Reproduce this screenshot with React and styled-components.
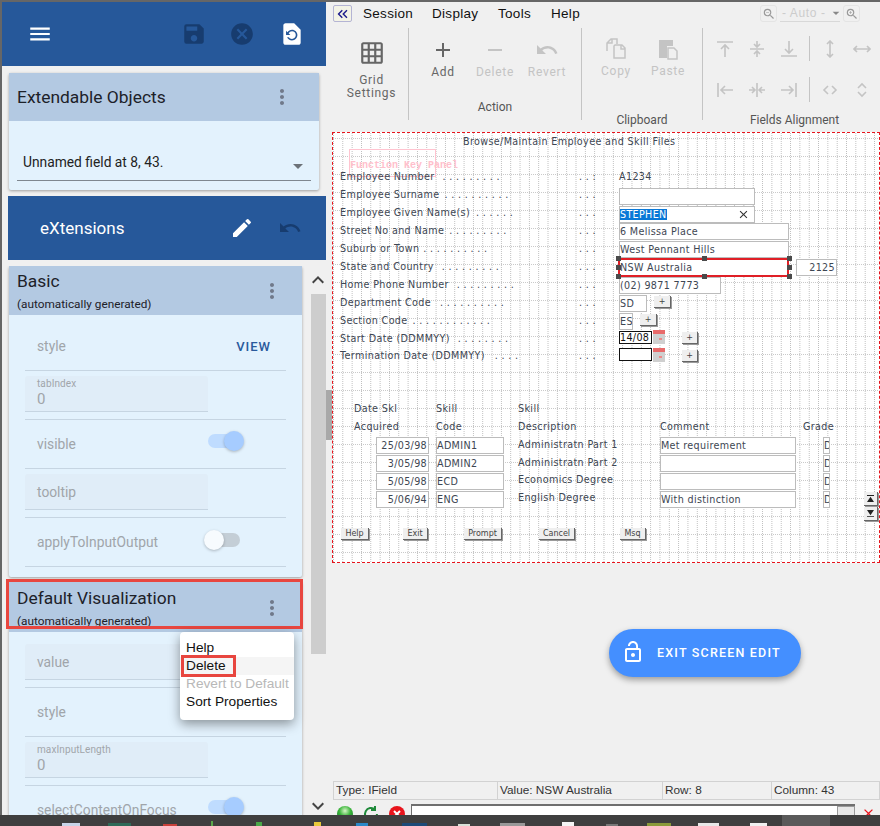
import React from 'react';
import styled, { createGlobalStyle, css } from 'styled-components';
import {
  MdMenu, MdSave, MdCancel, MdRestorePage, MdMoreVert, MdEdit, MdUndo, MdArrowDropDown,
  MdKeyboardArrowUp, MdKeyboardArrowDown, MdKeyboardDoubleArrowLeft, MdAdd, MdRemove, MdLockOpen,
  MdGridOn, MdZoomIn, MdZoomOut, MdClose,
} from 'react-icons/md';

const GlobalStyle = createGlobalStyle`
  html, body { margin: 0; padding: 0; height: 100%; }
  body { font-family: Roboto, "Liberation Sans", sans-serif; background: #f0f0f0; overflow: hidden; }
  #root { height: 100%; }
`;

const blue = '#26589a';
const navy = '#173c6f';

const Page = styled.div`
  position: relative;
  width: 880px;
  height: 826px;
  overflow: hidden;
  display: flex;
  flex-direction: column;
  background: #f0f0f0;
  border-top: 2px solid #666;
  box-sizing: border-box;
`;

const Main = styled.div`
  flex: 1;
  display: flex;
  min-height: 0;
`;

/* left panel */
const Side = styled.aside`
  width: 326px;
  flex: none;
  box-sizing: border-box;
  border-left: 2px solid #666;
  display: flex;
  flex-direction: column;
`;

const TopBar = styled.div`
  height: 64px;
  flex: none;
  background: ${blue};
  display: flex;
  align-items: center;
  padding: 0 0 0 25px;
  color: #fff;
  font-size: 26px;
  svg { display: block; }
`;

const BarIcon = styled.span`
  display: flex;
  color: ${(p) => (p.$off ? navy : '#fff')};
  margin-left: ${(p) => p.$gap || 0}px;
  font-size: ${(p) => p.$size || 26}px;
`;

const Card = styled.section`
  background: #e3f2fd;
  box-shadow: 0 1px 3px rgba(0, 0, 0, 0.35);
  border-radius: 2px;
  position: relative;
`;

const ObjectsCard = styled(Card)`
  margin: 7px 7px 0 7px;
  height: 117px;
`;

const CardHead = styled.header`
  background: #b3c9e2;
  height: ${(p) => p.$h}px;
  box-sizing: border-box;
  padding: ${(p) => p.$top || 0}px 0 0 8px;
  position: relative;
  color: #1d2129;
  overflow: hidden;
`;

const CardTitle = styled.div`
  font-size: 17.4px;
  line-height: 22px;
`;

const Sub = styled.div`
  font-size: 11.8px;
  line-height: 16px;
  margin-top: 4px;
`;

const Kebab = styled.span`
  position: absolute;
  right: ${(p) => p.$r}px;
  top: ${(p) => p.$t}px;
  display: flex;
  color: #70798a;
  font-size: 24px;
`;

const Select = styled.div`
  margin: 30px 8px 0 8px;
  height: 29px;
  border-bottom: 1px solid #7f8790;
  padding-left: 6px;
  display: flex;
  justify-content: space-between;
  font-size: 13.8px;
  line-height: 22px;
  color: #222;
  svg { font-size: 24px; color: #6c7278; margin: 3px 1px 0 0; }
`;

const ExtBar = styled.div`
  margin: 6px 0 0 6px;
  height: 64px;
  flex: none;
  background: ${blue};
  display: flex;
  align-items: center;
  padding-left: 32px;
  color: #fff;
  font-size: 17px;
`;

const ExtTitle = styled.span`
  width: 190px;
`;

const PropsArea = styled.div`
  flex: 1;
  min-height: 0;
  margin-top: 6px;
  display: flex;
  position: relative;
  overflow: hidden;
`;

const PropsList = styled.div`
  width: 293px;
  margin-left: 7px;
  display: flex;
  flex-direction: column;
  gap: 5px;
`;

const CardBody = styled.div`
  padding: ${(p) => p.$top}px 16px 10px 16px;
`;

const Row = styled.div`
  height: 49px;
  box-sizing: border-box;
  border-bottom: 1px solid #c6d5e2;
  display: flex;
  align-items: center;
  justify-content: space-between;
  padding-left: 12px;
  font-size: 13.8px;
  color: #a0a5aa;
  position: relative;
`;

const ViewLink = styled.span`
  color: #2a5a9c;
  font-size: 13px;
  font-weight: 500;
  letter-spacing: 1px;
  margin-right: 15px;
`;

const InputRow = styled.div`
  height: 49px;
  box-sizing: border-box;
  border-bottom: 1px solid #c6d5e2;
  padding-top: 5px;
`;

const InputBox = styled.div`
  width: 183px;
  height: 36px;
  box-sizing: border-box;
  background: #e0edf8;
  border-bottom: 1px solid #c6d5e2;
  border-radius: 3px 3px 0 0;
  padding-left: 12px;
  color: #a0a5aa;
  font-size: 13.8px;
  display: flex;
  flex-direction: column;
  justify-content: center;
`;

const InputLabel = styled.div`
  font-size: 10px;
  line-height: 11px;
  letter-spacing: 0.1px;
`;

const InputValue = styled.div`
  line-height: 20px;
  font-size: 15px;
`;

const Track = styled.span`
  position: absolute;
  top: ${(p) => p.$t}px;
  left: ${(p) => (p.$on ? 183 : 185)}px;
  width: ${(p) => (p.$on ? 34 : 30)}px;
  height: 14px;
  border-radius: 7px;
  background: ${(p) => (p.$on ? '#bfdcff' : '#c4ced6')};
`;

const Thumb = styled.span`
  position: absolute;
  top: -3px;
  left: ${(p) => (p.$on ? 16 : -6)}px;
  width: 20px;
  height: 20px;
  border-radius: 50%;
  background: ${(p) => (p.$on ? '#a6ccff' : '#f7fbfe')};
  box-shadow: 0 1px 3px rgba(0, 0, 0, 0.25);
`;

const Scroller = styled.div`
  position: absolute;
  left: 308px;
  top: 0;
  bottom: 0;
  width: 16px;
  display: flex;
  flex-direction: column;
  align-items: center;
  color: #444;
`;

const ScrollArrow = styled.span`
  display: flex;
  height: ${(p) => p.$h}px;
  align-items: center;
  font-size: 24px;
  flex: none;
`;

const ScrollThumb = styled.div`
  width: 15px;
  height: 360px;
  background: #cdcdcd;
  flex: none;
`;

const Spacer = styled.div`
  flex: 1;
`;

const Menu = styled.div`
  position: absolute;
  left: 178px;
  top: 366px;
  width: 114px;
  height: 88px;
  box-sizing: border-box;
  background: #fff;
  border-radius: 4px;
  padding-top: 7px;
  box-shadow: 0 4px 12px rgba(0, 0, 0, 0.4);
  font-family: "Liberation Sans", Arial, sans-serif;
  font-size: 13.7px;
  color: #111;
`;

const MenuItem = styled.div`
  height: 18px;
  line-height: 18px;
  padding-left: 6px;
  ${(p) => p.$hover && css`background: #f5f5f5;`}
  ${(p) => p.$off && css`color: #b8b8b8;`}
`;

const Callout = styled.div`
  position: absolute;
  box-sizing: border-box;
  border: 3px solid #e8463f;
  left: ${(p) => p.$x}px;
  top: ${(p) => p.$y}px;
  width: ${(p) => p.$w}px;
  height: ${(p) => p.$h}px;
  pointer-events: none;
`;

const Sash = styled.div`
  position: absolute;
  left: 326px;
  top: 388px;
  width: 6px;
  height: 50px;
  background: #a8a8a8;
`;

/* right side */
const Work = styled.div`
  flex: 1;
  min-width: 0;
  padding-left: 6px;
  display: flex;
  flex-direction: column;
  position: relative;
`;

const MenuBar = styled.div`
  height: 23px;
  display: flex;
  align-items: center;
  font-family: "Liberation Sans", Arial, sans-serif;
  font-size: 13.5px;
  color: #111;
  flex: none;
`;

const BackBtn = styled.span`
  width: 19px;
  height: 17px;
  box-sizing: border-box;
  margin: 0 11px 0 1px;
  border: 1px solid #b4b4d4;
  border-radius: 2px;
  background: #f3f3e6;
  color: #1c1c8c;
  display: flex;
  align-items: center;
  justify-content: center;
  font-size: 20px;
`;

const MenuText = styled.span`
  width: ${(p) => p.$w}px;
  letter-spacing: 0.3px;
`;

const ZoomArea = styled.div`
  margin-left: auto;
  margin-right: 20px;
  display: flex;
  align-items: center;
  color: #c8c8c8;
  font-size: 12px;
  gap: 3px;
`;

const ZoomBtn = styled.span`
  width: 17px;
  height: 17px;
  border: 1px solid #e4e4e4;
  border-radius: 3px;
  display: flex;
  align-items: center;
  justify-content: center;
  font-size: 14px;
  color: #999;
  box-sizing: border-box;
`;

const ZoomSelect = styled.span`
  width: 60px;
  height: 17px;
  box-sizing: border-box;
  padding-left: 2px;
  border-bottom: 1px solid #d8d8d8;
  display: flex;
  align-items: center;
  white-space: nowrap;
  letter-spacing: 0.6px;
  color: #ccc;
  svg { color: #888; font-size: 16px; flex: none; margin-left: 3px; }
`;

const Ribbon = styled.div`
  height: 108px;
  flex: none;
  display: flex;
  padding-top: 3px;
  box-sizing: border-box;
`;

const Group = styled.div`
  width: ${(p) => p.$w}px;
  height: 92px;
  box-sizing: border-box;
  flex: none;
  padding-left: ${(p) => p.$pad || 0}px;
  border-right: ${(p) => (p.$last ? 'none' : '1px solid #c4c4c4')};
  display: flex;
  flex-direction: column;
  align-items: center;
  font-size: 12px;
  color: #666;
`;

const Tools = styled.div`
  display: flex;
  justify-content: center;
  width: 100%;
  height: ${(p) => p.$h}px;
  flex: none;
`;

const Tool = styled.div`
  width: ${(p) => p.$w || 52}px;
  display: flex;
  flex-direction: column;
  align-items: center;
  padding-top: ${(p) => p.$top}px;
  color: ${(p) => (p.$off ? '#c4c4c4' : '#666')};
  line-height: 13px;
  text-align: center;
  font-size: 12px;
  letter-spacing: 0.7px;
  svg { display: block; margin-bottom: ${(p) => p.$gap}px; }
`;

const GroupLabel = styled.div`
  color: #555;
  line-height: 14px;
  margin-left: ${(p) => p.$ml || 0}px;
`;

const AlignGrid = styled.div`
  width: 100%;
  height: 76px;
  flex: none;
  display: grid;
  grid-template-columns: repeat(3, 32px) 8px 34px 30px;
  grid-template-rows: 41px 41px;
  padding-left: 6px;
  box-sizing: border-box;
  margin-bottom: 9px;
  align-items: center;
  justify-items: center;
  color: #c4c4c4;
`;

const AlignSep = styled.span`
  width: 1px;
  height: 25px;
  background: #c4c4c4;
`;

const Canvas = styled.div`
  position: absolute;
  left: 6px;
  top: 130px;
  width: 548px;
  height: 431px;
  box-sizing: border-box;
  border: 1px dashed #e8141c;
  background-color: #fff;
  isolation: isolate;
  font-family: "DejaVu Sans", Verdana, sans-serif;
  font-size: 9.6px;
  color: #3d4652;
  overflow: hidden;

  /* dotted character grid */
  &::before, &::after {
    content: '';
    position: absolute;
    inset: 0;
    z-index: -1;
  }
  &::before {
    background: linear-gradient(to right, #bdbdbd 1px, transparent 1px) 0 0 / 9.33px 100%;
    mask: linear-gradient(to bottom, #000 50%, transparent 50%) 0 0 / 100% 2px;
  }
  &::after {
    background: linear-gradient(to bottom, #cacaca 1px, transparent 1px) 0 5px / 100% 18px;
    mask: linear-gradient(to right, #000 50%, transparent 50%) 0 0 / 2px 100%;
  }
`;

const Sheet = styled.div`
  position: absolute;
  left: 0;
  top: -1px;
  width: 100%;
  height: 100%;
`;

const Cell = styled.span`
  position: absolute;
  left: ${(p) => p.$x}px;
  top: ${(p) => p.$y}px;
  white-space: pre;
  line-height: 14px;
  letter-spacing: 0.36px;
`;

const Dots = styled.span`
  margin-left: ${(p) => p.$gap || 0}px;
  letter-spacing: 3.7px;
`;

const Field = styled.span`
  position: absolute;
  left: ${(p) => p.$x}px;
  top: ${(p) => p.$y}px;
  width: ${(p) => p.$w}px;
  height: ${(p) => (p.$dark ? 13 : 17)}px;
  box-sizing: border-box;
  border: 1px solid ${(p) => (p.$dark ? '#111' : '#bcbcbc')};
  background: #fff;
  line-height: ${(p) => (p.$dark ? 11 : 15)}px;
  padding: 0 1px 0 0;
  white-space: pre;
  letter-spacing: 0.33px;
  overflow: hidden;
  color: ${(p) => (p.$dark ? '#111' : '#3d4652')};
  text-align: ${(p) => (p.$right ? 'right' : 'left')};
`;

const Selected = styled.span`
  background: #0a78d7;
  color: #fff;
`;

const ClearX = styled.span`
  position: absolute;
  right: 4px;
  top: 1px;
  display: flex;
  color: #333;
  font-size: 13px;
`;

const PickBox = styled.span`
  position: absolute;
  left: 285px;
  top: 126px;
  width: 171px;
  height: 19px;
  box-sizing: border-box;
  border: 2px solid #e01f26;
  z-index: 2;
`;

const Handle = styled.span`
  position: absolute;
  left: ${(p) => p.$x}px;
  top: ${(p) => p.$y}px;
  width: 5px;
  height: 5px;
  background: #4a4a4a;
  z-index: 3;
`;

const KeyBtn = styled.span`
  position: absolute;
  left: ${(p) => p.$x}px;
  top: ${(p) => p.$y}px;
  width: ${(p) => p.$w}px;
  height: ${(p) => p.$h || 12}px;
  box-sizing: border-box;
  background: #efefef;
  border-right: 1px solid #666;
  border-bottom: 1px solid #666;
  font-size: 8px;
  line-height: 11px;
  text-align: center;
  color: #444;
  box-shadow: 1px 1px 0 #9a9a9a;
  svg { display: block; margin: 3px auto 0; }
`;

const FnPanel = styled.span`
  position: absolute;
  left: 16px;
  top: 17px;
  width: 87px;
  height: 28px;
  box-sizing: border-box;
  border: 1px solid #ffc4d0;
`;

const FnLabel = styled.span`
  position: absolute;
  left: 17px;
  top: 28px;
  font-family: "Liberation Mono", monospace;
  font-size: 10px;
  line-height: 12px;
  font-weight: 700;
  color: #ffc0cc;
  white-space: pre;
`;

const Calendar = styled.svg`
  position: absolute;
  left: ${(p) => p.$x}px;
  top: ${(p) => p.$y}px;
`;

const ExitButton = styled.button`
  position: absolute;
  left: 283px;
  top: 627px;
  width: 192px;
  height: 48px;
  border: none;
  border-radius: 24px;
  background: #448fff;
  color: #fff;
  font-family: Roboto, sans-serif;
  font-size: 12.5px;
  font-weight: 500;
  letter-spacing: 1.2px;
  display: flex;
  align-items: center;
  padding: 0 0 2px 12px;
  gap: 12px;
  box-shadow: 0 3px 6px rgba(0, 0, 0, 0.35);
  svg { font-size: 24px; }
`;

const StatusBar = styled.div`
  position: absolute;
  left: 7px;
  top: 779px;
  width: 547px;
  height: 19px;
  box-sizing: border-box;
  border: 1px solid #d2d2d2;
  display: flex;
  font-family: "Liberation Sans", Arial, sans-serif;
  font-size: 11.8px;
  line-height: 17px;
  color: #333;
`;

const StatusCell = styled.span`
  width: ${(p) => p.$w}px;
  flex: none;
  box-sizing: border-box;
  border-right: ${(p) => (p.$last ? 'none' : '1px solid #d2d2d2')};
  padding-left: 2px;
`;

const CmdBar = styled.div`
  position: absolute;
  left: 10px;
  top: 802px;
  width: 540px;
  height: 12px;
  display: flex;
  align-items: flex-start;
`;

const CmdIcon = styled.svg`
  flex: none;
  margin-right: ${(p) => p.$m}px;
  margin-top: 1px;
`;

const CmdInput = styled.div`
  width: 444px;
  height: 12px;
  box-sizing: border-box;
  border-top: 2px solid #6f6f6f;
  border-left: 1px solid #6f6f6f;
  background: #fff;
  display: flex;
  justify-content: flex-end;
  flex: none;
`;

const CmdDrop = styled.span`
  width: 18px;
  box-sizing: border-box;
  background: #e8e8e8;
  border: 1px solid #9a9a9a;
`;

const CmdClose = styled.span`
  margin: 2px 0 0 6px;
  color: #e8141c;
  font-size: 15px;
  display: flex;
`;

const Taskbar = styled.div`
  height: 11px;
  flex: none;
  background: #3f3f3f;
  position: relative;
  z-index: 5;
`;

const Tray = styled.span`
  position: absolute;
  left: ${(p) => p.$x}px;
  top: ${(p) => p.$y}px;
  width: ${(p) => p.$w}px;
  bottom: 0;
  background: ${(p) => p.$c};
`;

const AlignIcon = ({ d }) => (
  <svg width="18" height="18" viewBox="0 0 18 18" fill="none" stroke="currentColor" strokeWidth="1.6">
    <path d={d} />
  </svg>
);

const alignIcons = [
  'M1 2h16M9 17V6M5 9l4-4 4 4',
  'M2 9h14M9 1v5M6 4l3 3 3-3M9 17v-5M6 14l3-3 3 3',
  'M1 16h16M9 1v11M5 9l4 4 4-4',
  null,
  'M9 1v16M6 4l3-3 3 3M6 14l3 3 3-3',
  'M1 9h16M4 6L1 9l3 3M14 6l3 3-3 3',
  'M2 2v14M17 9H6M9 5L5 9l4 4',
  'M9 2v14M1 9h5M4 6l3 3-3 3M17 9h-5M14 6l-3 3 3 3',
  'M16 2v14M1 9h11M9 5l4 4-4 4',
  null,
  'M7 5L3 9l4 4M11 5l4 4-4 4',
  'M5 7l4-4 4 4M5 11l4 4 4-4',
];

const labels = [
  ['Employee Number', 9, 8, 38],
  ['Employee Surname', 10, 5, 56],
  ['Employee Given Name(s)', 6, 6, 74],
  ['Street No and Name', 9, 5, 92],
  ['Suburb or Town', 10, 4, 110],
  ['State and Country', 9, 8, 128],
  ['Home Phone Number', 9, 8, 146],
  ['Department Code', 10, 9, 164],
  ['Section Code', 12, 5, 182],
  ['Start Date (DDMMYY)', 8, 8, 200],
  ['Termination Date (DDMMYY)', 4, 10, 217],
];

const fields = [
  { x: 286, y: 56, w: 136, t: '' },
  { x: 286, y: 91, w: 170, t: '6 Melissa Place' },
  { x: 286, y: 109, w: 170, t: 'West Pennant Hills' },
  { x: 286, y: 127, w: 170, t: 'NSW Australia' },
  { x: 463, y: 127, w: 41, t: '2125', right: true },
  { x: 286, y: 145, w: 102, t: '(02) 9871 7773' },
  { x: 286, y: 163, w: 28, t: 'SD' },
  { x: 286, y: 181, w: 14, t: 'ES' },
  { x: 286, y: 199, w: 33, t: '14/08', dark: true },
  { x: 286, y: 216, w: 33, t: '', dark: true },
  { x: 43, y: 305, w: 53, t: '25/03/98', right: true },
  { x: 43, y: 323, w: 53, t: '3/05/98', right: true },
  { x: 43, y: 341, w: 53, t: '5/05/98', right: true },
  { x: 43, y: 359, w: 53, t: '5/06/94', right: true },
  { x: 103, y: 305, w: 68, t: 'ADMIN1' },
  { x: 103, y: 323, w: 68, t: 'ADMIN2' },
  { x: 103, y: 341, w: 68, t: 'ECD' },
  { x: 103, y: 359, w: 68, t: 'ENG' },
  { x: 327, y: 305, w: 136, t: 'Met requirement' },
  { x: 327, y: 323, w: 136, t: '' },
  { x: 327, y: 341, w: 136, t: '' },
  { x: 327, y: 359, w: 136, t: 'With distinction' },
  { x: 490, y: 305, w: 7, t: 'D' },
  { x: 490, y: 323, w: 7, t: 'D' },
  { x: 490, y: 341, w: 7, t: 'D' },
  { x: 490, y: 359, w: 7, t: 'D' },
];

const texts = [
  ['Browse/Maintain Employee and Skill Files', 130, 3],
  ['A1234', 286, 38],
  ['Date Skl', 21, 270],
  ['Acquired', 21, 288],
  ['Skill', 103, 270],
  ['Code', 103, 288],
  ['Skill', 185, 270],
  ['Description', 185, 288],
  ['Administratn Part 1', 185, 306],
  ['Administratn Part 2', 185, 324],
  ['Economics Degree', 185, 341],
  ['English Degree', 185, 359],
  ['Comment', 327, 288],
  ['Grade', 470, 288],
];

const handles = [
  [283, 124], [369, 124], [454, 124],
  [283, 133], [454, 133],
  [283, 142], [369, 142], [454, 142],
];

const keys = [
  ['Help', 8, 396, 28],
  ['Exit', 70, 396, 25],
  ['Prompt', 131, 396, 38],
  ['Cancel', 206, 396, 36],
  ['Msq', 287, 396, 26],
  ['+', 321, 164, 17],
  ['+', 307, 182, 17],
  ['+', 349, 200, 16],
  ['+', 349, 218, 16],
];

const trayIcons = [
  [62, 18, 8, '#c8d4e8'],
  [108, 23, 8, '#2f6a58'],
  [163, 14, 9, '#c8403a'],
  [211, 2, 6, '#5aa84a'],
  [256, 6, 7, '#4aa848'],
  [314, 7, 7, '#e8c83a'],
  [356, 12, 8, '#2a88c8'],
  [402, 25, 8, '#1c4a78'],
  [458, 12, 9, '#d8e0d8'],
  [500, 25, 8, '#999'],
  [562, 12, 7, '#f4f4f4'],
  [606, 12, 9, '#777'],
  [647, 24, 8, '#8a9a3a'],
  [698, 21, 8, '#e8e8e8'],
  [750, 17, 8, '#f0f0f0'],
];

const Cal = ({ x, y }) => (
  <Calendar $x={x} $y={y} width="12" height="14" viewBox="0 0 12 14">
    <rect width="12" height="14" fill="#cfcfcf" />
    <rect width="12" height="4" fill="#e86a6a" />
    <rect x="6" y="8" width="3" height="2" fill="#e88" />
  </Calendar>
);

export default function App() {
  return (
    <Page>
      <GlobalStyle />
      <Main>
        <Side>
          <TopBar>
            <MdMenu />
            <BarIcon $off $gap={128}><MdSave /></BarIcon>
            <BarIcon $off $gap={22}><MdCancel /></BarIcon>
            <BarIcon $gap={24}><MdRestorePage /></BarIcon>
          </TopBar>
          <ObjectsCard>
            <CardHead $h={48} $top={13}>
              <CardTitle>Extendable Objects</CardTitle>
              <Kebab $r={25} $t={12}><MdMoreVert /></Kebab>
            </CardHead>
            <Select>
              Unnamed field at 8, 43.
              <MdArrowDropDown />
            </Select>
          </ObjectsCard>
          <ExtBar>
            <ExtTitle>eXtensions</ExtTitle>
            <BarIcon $size={24}><MdEdit /></BarIcon>
            <BarIcon $off $gap={24} $size={24}><MdUndo /></BarIcon>
          </ExtBar>
          <PropsArea>
            <PropsList>
              <Card>
                <CardHead $h={49} $top={4}>
                  <CardTitle>Basic</CardTitle>
                  <Sub>(automatically generated)</Sub>
                  <Kebab $r={18} $t={13}><MdMoreVert /></Kebab>
                </CardHead>
                <CardBody $top={7}>
                  <Row>style<ViewLink>VIEW</ViewLink></Row>
                  <InputRow>
                    <InputBox>
                      <InputLabel>tabIndex</InputLabel>
                      <InputValue>0</InputValue>
                    </InputBox>
                  </InputRow>
                  <Row>visible<Track $on $t={14}><Thumb $on /></Track></Row>
                  <InputRow><InputBox>tooltip</InputBox></InputRow>
                  <Row>applyToInputOutput<Track $t={15}><Thumb /></Track></Row>
                </CardBody>
              </Card>
              <Card>
                <CardHead $h={50} $top={5}>
                  <CardTitle>Default Visualization</CardTitle>
                  <Sub>(automatically generated)</Sub>
                  <Kebab $r={18} $t={14}><MdMoreVert /></Kebab>
                </CardHead>
                <CardBody $top={7}>
                  <InputRow><InputBox>value</InputBox></InputRow>
                  <Row>style</Row>
                  <InputRow>
                    <InputBox>
                      <InputLabel>maxInputLength</InputLabel>
                      <InputValue>0</InputValue>
                    </InputBox>
                  </InputRow>
                  <Row>selectContentOnFocus<Track $on $t={14}><Thumb $on /></Track></Row>
                </CardBody>
              </Card>
            </PropsList>
            <Scroller>
              <ScrollArrow $h={28}><MdKeyboardArrowUp /></ScrollArrow>
              <ScrollThumb />
              <Spacer />
              <ScrollArrow $h={18}><MdKeyboardArrowDown /></ScrollArrow>
            </Scroller>
            <Callout $x={4} $y={313} $w={297} $h={50} />
            <Menu>
              <MenuItem>Help</MenuItem>
              <MenuItem $hover>Delete</MenuItem>
              <MenuItem $off>Revert to Default</MenuItem>
              <MenuItem>Sort Properties</MenuItem>
            </Menu>
            <Callout $x={179} $y={389} $w={55} $h={22} />
          </PropsArea>
        </Side>
        <Work>
          <MenuBar>
            <BackBtn><MdKeyboardDoubleArrowLeft /></BackBtn>
            <MenuText $w={69}>Session</MenuText>
            <MenuText $w={66}>Display</MenuText>
            <MenuText $w={53}>Tools</MenuText>
            <MenuText $w={40}>Help</MenuText>
            <ZoomArea>
              <ZoomBtn><MdZoomOut /></ZoomBtn>
              <ZoomSelect>- Auto -<MdArrowDropDown /></ZoomSelect>
              <ZoomBtn><MdZoomIn /></ZoomBtn>
            </ZoomArea>
          </MenuBar>
          <Ribbon>
            <Group $w={77} $pad={3}>
              <Tools $h={76}>
                <Tool $w={70} $top={12} $gap={8}>
                  <MdGridOn size={26} />
                  Grid<br />Settings
                </Tool>
              </Tools>
            </Group>
            <Group $w={173}>
              <Tools $h={72}>
                <Tool $top={10} $gap={4}><MdAdd size={24} />Add</Tool>
                <Tool $off $top={10} $gap={4}><MdRemove size={24} />Delete</Tool>
                <Tool $off $top={10} $gap={4}><MdUndo size={24} />Revert</Tool>
              </Tools>
              <GroupLabel>Action</GroupLabel>
            </Group>
            <Group $w={121}>
              <Tools $h={85}>
                <Tool $off $top={8} $gap={3}>
                  <svg width="22" height="26" viewBox="0 0 22 26" fill="none" stroke="#c4c4c4" strokeWidth="1.5">
                    <path d="M2 15V7l4-4h6v5M7 3v4H2M9 10v12h11V12l-3-3h-7zM16 9v4h4" />
                  </svg>
                  Copy
                </Tool>
                <Tool $off $top={8} $gap={3}>
                  <svg width="22" height="26" viewBox="0 0 22 26">
                    <path d="M2 4h14v6h-6v12H2z" fill="#c4c4c4" />
                    <path d="M11 12h6l3 3v8h-9z" fill="none" stroke="#c4c4c4" strokeWidth="1.5" />
                  </svg>
                  Paste
                </Tool>
              </Tools>
              <GroupLabel>Clipboard</GroupLabel>
            </Group>
            <Group $w={177} $last>
              <AlignGrid>
                {alignIcons.map((d, i) => (d ? <AlignIcon key={i} d={d} /> : <AlignSep key={i} />))}
              </AlignGrid>
              <GroupLabel $ml={6}>Fields Alignment</GroupLabel>
            </Group>
          </Ribbon>
          <Canvas>
            <Sheet>
              <FnPanel />
              <FnLabel>Function Key Panel</FnLabel>
              {labels.map(([a, n, gap, y]) => (
                <Cell key={a} $x={7} $y={y}>{a}<Dots $gap={gap}>{'.'.repeat(n)}</Dots></Cell>
              ))}
              {labels.map(([a, , , y]) => (
                <Cell key={`${a}-d`} $x={246} $y={y}><Dots>{a === 'Employee Number' ? '..:' : '...'}</Dots></Cell>
              ))}
              {texts.map(([t, x, y]) => <Cell key={t + x + y} $x={x} $y={y}>{t}</Cell>)}
              {fields.map((f) => (
                <Field key={`${f.x}-${f.y}`} $x={f.x} $y={f.y} $w={f.w} $right={f.right} $dark={f.dark}>{f.t}</Field>
              ))}
              <Field $x={286} $y={74} $w={136}>
                <Selected>STEPHEN</Selected>
                <ClearX><MdClose /></ClearX>
              </Field>
              <PickBox />
              {handles.map(([x, y]) => <Handle key={`${x}${y}`} $x={x} $y={y} />)}
              <Cal x={320} y={198} />
              <Cal x={320} y={216} />
              {keys.map(([t, x, y, w]) => <KeyBtn key={`${x}${y}`} $x={x} $y={y} $w={w}>{t}</KeyBtn>)}
              <KeyBtn $x={531} $y={360} $w={14} $h={14}>
                <svg width="7" height="7" viewBox="0 0 8 8"><path d="M0 0h8v1H0zM4 2l4 6H0z" fill="#222" /></svg>
              </KeyBtn>
              <KeyBtn $x={531} $y={375} $w={14} $h={14}>
                <svg width="7" height="7" viewBox="0 0 8 8"><path d="M0 7h8v1H0zM4 6L0 0h8z" fill="#222" /></svg>
              </KeyBtn>
            </Sheet>
          </Canvas>
          <StatusBar>
            <StatusCell $w={164}>Type: IField</StatusCell>
            <StatusCell $w={165}>Value: NSW Australia</StatusCell>
            <StatusCell $w={109}>Row: 8</StatusCell>
            <StatusCell $w={107} $last>Column: 43</StatusCell>
          </StatusBar>
          <CmdBar>
            <CmdIcon $m={8} width="18" height="18" viewBox="0 0 18 18">
              <defs>
                <radialGradient id="ball" cx="0.5" cy="0.3" r="0.7">
                  <stop offset="0" stopColor="#d8f5c8" />
                  <stop offset="0.5" stopColor="#3ab53a" />
                  <stop offset="1" stopColor="#157a2a" />
                </radialGradient>
              </defs>
              <circle cx="9" cy="9" r="8" fill="url(#ball)" />
            </CmdIcon>
            <CmdIcon $m={8} width="18" height="18" viewBox="0 0 18 18">
              <path d="M15 9a6 6 0 1 1-2-4.5M13 1v4h-4" fill="none" stroke="#1f8a3a" strokeWidth="2" />
            </CmdIcon>
            <CmdIcon $m={5} width="18" height="18" viewBox="0 0 18 18">
              <circle cx="9" cy="9" r="8" fill="#e8141c" />
              <path d="M6 6l6 6M12 6l-6 6" stroke="#fff" strokeWidth="2" />
            </CmdIcon>
            <CmdInput><CmdDrop /></CmdInput>
            <CmdClose><MdClose /></CmdClose>
          </CmdBar>
          <ExitButton><MdLockOpen />EXIT SCREEN EDIT</ExitButton>
        </Work>
        <Sash />
      </Main>
      <Taskbar>
        <Tray $x={782} $y={0} $w={48} $c="#5a5a5a" />
        {trayIcons.map(([x, w, y, c]) => <Tray key={x} $x={x} $y={y} $w={w} $c={c} />)}
      </Taskbar>
    </Page>
  );
}
